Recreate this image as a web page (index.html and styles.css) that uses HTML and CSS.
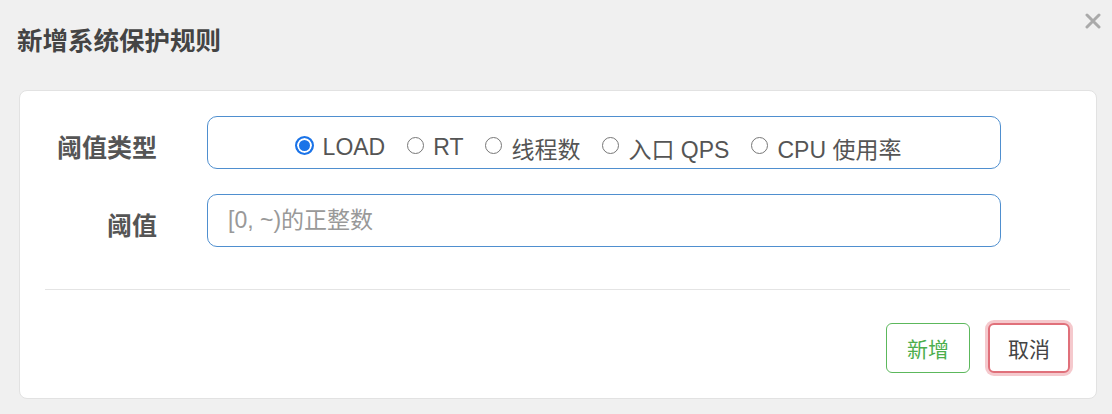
FILE: index.html
```html
<!DOCTYPE html>
<html>

<head>
    <meta charset="UTF-8">
    <title>新增系统保护规则</title>
    <link rel="stylesheet" href="styles.css">
</head>

<body>
    <div class="modal">
        <div class="modal-header">
            <h3>新增系统保护规则</h3>
            <span class="close">
                <svg width="16" height="16" viewBox="0 0 16 16">
                    <path d="M2 2 L14 14 M14 2 L2 14" stroke="#aaa" stroke-width="3" stroke-linecap="round" />
                </svg>
            </span>
        </div>

        <div class="card">
            <form class="form">
                <label class="label">阈值类型</label>
                <div class="radio-box">
                    <label class="radio"><input type="radio" name="grade" checked> LOAD</label>
                    <label class="radio"><input type="radio" name="grade"> RT</label>
                    <label class="radio"><input type="radio" name="grade"> 线程数</label>
                    <label class="radio"><input type="radio" name="grade"> 入口 QPS</label>
                    <label class="radio"><input type="radio" name="grade"> CPU 使用率</label>
                </div>

                <label class="label" for="count">阈值</label>
                <input class="text-input" type="text" id="count" placeholder="[0, ~)的正整数">
            </form>

            <hr class="divider">

            <div class="footer">
                <button type="button" class="btn btn-add">新增</button>
                <button type="button" class="btn btn-cancel">取消</button>
            </div>
        </div>
    </div>
</body>

</html>
```

FILE: styles.css
```css
* {
    box-sizing: border-box;
    margin: 0;
    padding: 0;
}

body {
    background-color: #f0f0f0;
    color: #333;
    font-family: "Noto Sans CJK SC", "Liberation Sans", sans-serif;
    font-size: 16px;
    width: 1112px;
    height: 414px;
    overflow: hidden;
}

.modal {
    position: relative;
    padding: 0 15px 0 19px;
}

.modal-header {
    height: 90px;
    padding-top: 21px;
}

.modal-header h3 {
    margin-left: -2px;
    font-size: 25.5px;
    font-weight: bold;
    color: #444;
    line-height: 36px;
}

.close {
    position: absolute;
    top: 10px;
    right: 11px;
    width: 16px;
    height: 16px;
}

.card {
    height: 309px;
    background-color: #fff;
    border: 1px solid #e2e2e2;
    border-radius: 8px;
    padding: 25px 0 0 0;
}

.form {
    display: grid;
    grid-template-columns: 137px 794px;
    column-gap: 50px;
    row-gap: 25px;
    align-items: center;
}

.label {
    text-align: right;
    font-size: 25px;
    font-weight: bold;
    color: #555;
    padding-top: 6px;
}

.radio-box {
    height: 53px;
    border: 1px solid #4f8fcf;
    border-radius: 10px;
    display: flex;
    justify-content: center;
    align-items: center;
    gap: 22px;
    padding: 10px 12px 0 0;
}

.radio {
    display: flex;
    align-items: center;
    gap: 7px;
    font-size: 23px;
    color: #555;
    font-family: "Liberation Sans", "Noto Sans CJK SC", sans-serif;
}

.radio input {
    appearance: none;
    width: 17px;
    height: 17px;
    border: 1px solid #777;
    border-radius: 50%;
    margin-right: 2px;
    margin-top: -4px;
}

.radio input:checked {
    width: 19px;
    height: 19px;
    border: 2px solid #1a73e8;
    background-color: #1a73e8;
    box-shadow: inset 0 0 0 2px #fff;
}

.text-input {
    height: 53px;
    border: 1px solid #4f8fcf;
    border-radius: 10px;
    padding: 0 20px;
    font-size: 23px;
    font-family: "Liberation Sans", "Noto Sans CJK SC", sans-serif;
    color: #555;
    outline: none;
}

.text-input::placeholder {
    color: #999;
}

.divider {
    border: none;
    border-top: 1px solid #e4e4e4;
    margin: 42px 26px 0 25px;
}

.footer {
    display: flex;
    justify-content: flex-end;
    gap: 18px;
    padding: 33px 26px 0 0;
}

.btn {
    height: 50px;
    padding: 0 20px;
    font-size: 21px;
    font-family: "Noto Sans CJK SC", sans-serif;
    background-color: #fff;
    border-radius: 6px;
    cursor: pointer;
}

.btn-add {
    border: 1px solid #5cb85c;
    color: #4cae4c;
}

.btn-cancel {
    padding: 0 18px;
    border: 2px solid #e0707a;
    color: #444;
    box-shadow: 0 0 0 3px rgba(230, 120, 130, 0.4);
}
```
